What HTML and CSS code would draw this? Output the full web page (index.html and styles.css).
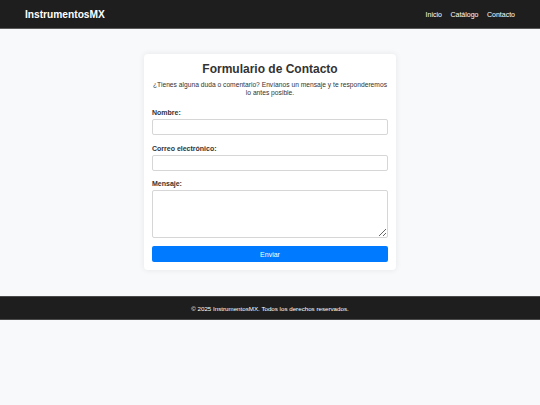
FILE: index.html
```html
<!DOCTYPE html>
<html lang="es">
<head>
<meta charset="utf-8">
<title>Contacto - InstrumentosMX</title>
<link rel="stylesheet" href="styles.css">
</head>
<body>
<header class="topbar">
  <div class="brand">InstrumentosMX</div>
  <nav class="nav">
    <a href="#">Inicio</a>
    <a href="#">Catálogo</a>
    <a href="#">Contacto</a>
  </nav>
</header>
<main class="main">
  <section class="card">
    <h1 class="title">Formulario de Contacto</h1>
    <p class="intro">¿Tienes alguna duda o comentario? Envíanos un mensaje y te responderemos lo antes posible.</p>
    <form class="form">
      <label class="label" for="nombre">Nombre:</label>
      <input class="field" id="nombre" type="text">
      <label class="label" for="correo">Correo electrónico:</label>
      <input class="field" id="correo" type="email">
      <label class="label" for="mensaje">Mensaje:</label>
      <textarea class="field area" id="mensaje"></textarea>
      <button class="submit" type="button">Enviar</button>
    </form>
  </section>
</main>
<footer class="footer">© 2025 InstrumentosMX. Todos los derechos reservados.</footer>
</body>
</html>
```
FILE: styles.css
```css
* { box-sizing: border-box; }
html, body { margin: 0; padding: 0; }
body {
  background: #f8f9fa;
  font-family: "Liberation Sans", Arial, sans-serif;
  color: #333;
}
.topbar {
  height: 29px;
  background: #1e1e1e;
  border-bottom: 1px solid #5a5a5a;
  display: flex;
  align-items: center;
  justify-content: space-between;
  padding: 0 25px;
}
.brand {
  color: #fff;
  font-weight: bold;
  font-size: 10.2px;
}
.nav { display: flex; gap: 8.5px; }
.nav a {
  color: #fff;
  text-decoration: none;
  font-size: 7px;
}
.main {
  padding: 25px 0 26px;
  display: flex;
  justify-content: center;
}
.card {
  width: 252px;
  background: #fff;
  border-radius: 4px;
  box-shadow: 0 0 6px rgba(0,0,0,0.08);
  padding: 7px 8px 8px;
}
.title {
  margin: 0;
  text-align: center;
  font-size: 12px;
  line-height: 16px;
  color: #333;
}
.intro {
  margin: 4px 0 0;
  text-align: center;
  font-size: 6.7px;
  line-height: 8px;
  color: #333;
}
.form { display: flex; flex-direction: column; margin-top: 11px; }
.label {
  font-weight: bold;
  font-size: 7px;
  line-height: 9px;
  color: #333;
  margin-bottom: 2px;
}
.field {
  height: 16px;
  border: 1px solid #d6d6d6;
  border-radius: 2px;
  background: #fff;
  margin-bottom: 8.5px;
  font-family: inherit;
  font-size: 7px;
  padding: 2px 4px;
}
.area {
  height: 48px;
  resize: vertical;
  margin-bottom: 8px;
}
.submit {
  height: 16px;
  border: none;
  border-radius: 2px;
  background: #007bff;
  color: #fff;
  font-family: inherit;
  font-size: 7px;
  padding: 0;
}
.footer {
  height: 24px;
  background: #1e1e1e;
  border-top: 1px solid #4a4a4a;
  border-bottom: 1px solid #4a4a4a;
  color: #fff;
  font-size: 6.2px;
  display: flex;
  align-items: center;
  justify-content: center;
}
```
